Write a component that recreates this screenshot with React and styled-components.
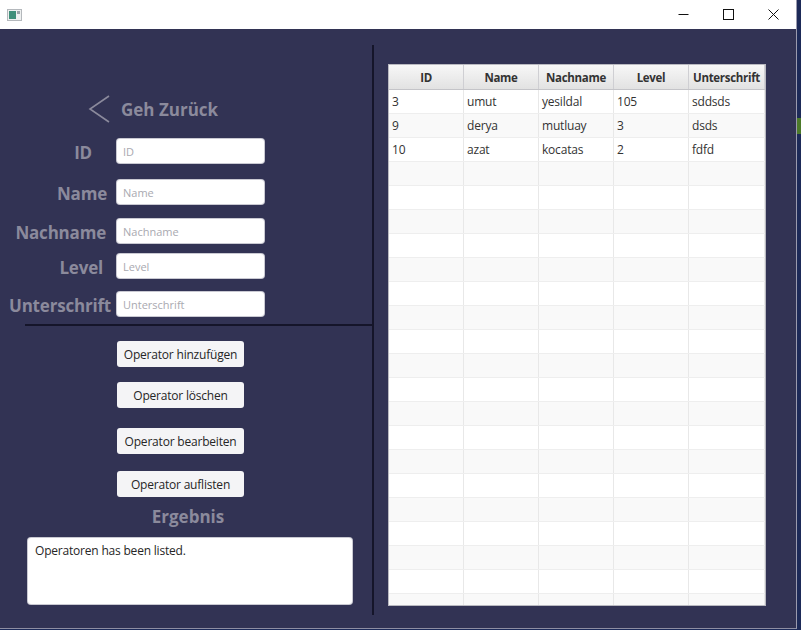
import styled, { createGlobalStyle } from 'styled-components';

// - - - GLOBAL - - - //
const Global = createGlobalStyle`
  html, body {
    margin: 0;
    padding: 0;
    width: 801px;
    height: 630px;
    overflow: hidden;
    background: #1d2a58;
  }
  * { box-sizing: border-box; }
`;

const Screen = styled.div`
  display: flex;
  flex-direction: row;
  width: 801px;
  height: 630px;
`;

const Window = styled.div`
  display: flex;
  flex-direction: column;
  width: 797px;
  height: 629px;
  border-right: 1px solid #9a9aae;
  border-bottom: 1px solid #8e8ea2;
`;

const Desktop = styled.div`
  flex: 1;
  background: linear-gradient(#1d2a58 0, #1d2a58 118px, #4c7a2a 118px, #4c7a2a 134px, #1d2a58 134px);
`;

// - - - TITLE BAR - - - //
const TitleBar = styled.header`
  display: flex;
  align-items: center;
  justify-content: space-between;
  height: 29px;
  background: #ffffff;
  padding-left: 7px;
`;

const Controls = styled.div`
  display: flex;
  height: 100%;
`;

const Control = styled.div`
  display: flex;
  align-items: center;
  justify-content: center;
  width: 45px;
  height: 100%;
`;

// - - - BODY - - - //
const Body = styled.main`
  flex: 1;
  display: flex;
  flex-direction: row;
  background: #323354;
`;

const LeftPane = styled.section`
  display: flex;
  flex-direction: column;
  width: 374px;
  margin: 16px 0 13px 0;
  border-right: 2px solid #15152a;
`;

const BackRow = styled.div`
  display: flex;
  align-items: center;
  gap: 10px;
  height: 30px;
  margin-top: 49px;
  padding-left: 88px;
`;

const Title = styled.span`
  font-family: "Open Sans", sans-serif;
  font-weight: 700;
  font-size: 17px;
  color: #8b8a9c;
`;

const FieldRow = styled.div`
  display: grid;
  grid-template-columns: 117px 147px;
  align-items: center;
  margin-top: ${p => p.$mt}px;
`;

const Label = styled.label`
  font-family: "Open Sans", sans-serif;
  font-weight: 700;
  font-size: 17px;
  color: #8b8a9c;
  text-align: right;
  padding-right: ${p => p.$pr}px;
  white-space: nowrap;
  letter-spacing: -0.2px;
  transform: translateY(1px);
`;

const Input = styled.input`
  height: 24px;
  width: 147px;
  border: none;
  border-radius: 3px;
  background: #ffffff;
  box-shadow: 0 0 0 1px #c9c9d2;
  padding: 0 6px;
  font-family: "Open Sans", sans-serif;
  font-size: 11px;
  outline: none;
  &::placeholder { color: #a9a9b0; }
`;

const HDivider = styled.hr`
  border: none;
  height: 2px;
  background: #15152a;
  margin: 8px 0 0 25px;
`;

const ButtonStack = styled.div`
  display: flex;
  flex-direction: column;
  align-items: flex-start;
  padding-left: 117px;
`;

const Button = styled.button`
  width: 127px;
  height: 26px;
  margin-top: ${p => p.$mt}px;
  border: none;
  border-radius: 3px;
  background: #f4f4f6;
  color: #262626;
  font-family: "Open Sans", sans-serif;
  font-size: 12px;
  letter-spacing: -0.2px;
  padding: 0;
`;

const Subtitle = styled.div`
  margin-top: 8px;
  text-align: center;
  width: 376px;
  font-family: "Open Sans", sans-serif;
  font-weight: 700;
  font-size: 17px;
  color: #8b8a9c;
`;

const ResultBox = styled.div`
  margin: 10px 0 0 28px;
  width: 324px;
  height: 66px;
  background: #ffffff;
  border-radius: 3px;
  box-shadow: 0 0 0 1px #c9c9d2;
  padding: 4px 7px;
  font-family: "Open Sans", sans-serif;
  font-size: 12px;
  color: #262626;
  letter-spacing: -0.2px;
`;

// - - - TABLE - - - //
const RightPane = styled.section`
  padding: 35px 0 0 14px;
`;

const Table = styled.div`
  width: 378px;
  height: 542px;
  border: 1px solid #b9b9c0;
  background: #ffffff;
  overflow: hidden;
`;

const HeadRow = styled.div`
  display: grid;
  grid-template-columns: 75px 75px 75px 75px 76px;
  height: 25px;
  background: linear-gradient(#f7f7f7, #e2e2e2);
  border-bottom: 1px solid #c4c4c8;
`;

const HeadCell = styled.div`
  display: flex;
  align-items: center;
  justify-content: center;
  border-right: 1px solid #cfcfd3;
  font-family: "Open Sans", sans-serif;
  font-weight: 700;
  font-size: 11.5px;
  color: #333333;
  letter-spacing: -0.3px;
  white-space: nowrap;
`;

const Row = styled.div`
  display: grid;
  grid-template-columns: 75px 75px 75px 75px 76px;
  height: 24px;
  background: ${p => (p.$odd ? '#f9f9f9' : '#ffffff')};
  border-bottom: 1px solid #eeeeee;
`;

const Cell = styled.div`
  display: flex;
  align-items: center;
  padding-left: 3px;
  border-right: 1px solid #e8e8e8;
  font-family: "Open Sans", sans-serif;
  font-size: 12px;
  color: #333333;
  letter-spacing: -0.2px;
`;

const fields = [
  { label: 'ID', pr: 25, mt: 15 },
  { label: 'Name', pr: 10, mt: 17 },
  { label: 'Nachname', pr: 11, mt: 15 },
  { label: 'Level', pr: 14, mt: 11 },
  { label: 'Unterschrift', pr: 6, mt: 14 },
];

const buttons = [
  { text: 'Operator hinzufügen', mt: 15 },
  { text: 'Operator löschen', mt: 15 },
  { text: 'Operator bearbeiten', mt: 20 },
  { text: 'Operator auflisten', mt: 17 },
];

const columns = ['ID', 'Name', 'Nachname', 'Level', 'Unterschrift'];

const data = [
  ['3', 'umut', 'yesildal', '105', 'sddsds'],
  ['9', 'derya', 'mutluay', '3', 'dsds'],
  ['10', 'azat', 'kocatas', '2', 'fdfd'],
];

const rows = Array.from({ length: 23 }, (_, i) => data[i] || ['', '', '', '', '']);

const App = () => {
  return (
    <>
      <Global />
      <Screen>
        <Window>
          {/* Title bar */}
          <TitleBar>
            <svg width="15" height="12" viewBox="0 0 15 12">
              <rect x="0.5" y="0.5" width="14" height="11" fill="#eef0f0" stroke="#b4b8bc" />
              <rect x="2" y="2" width="7" height="8" fill="#3f8f7a" />
              <rect x="10" y="2" width="3" height="3" fill="#9aa3a8" />
            </svg>
            <Controls>
              <Control>
                <svg width="11" height="11" viewBox="0 0 11 11">
                  <line x1="0.5" y1="5.5" x2="10.5" y2="5.5" stroke="#111" />
                </svg>
              </Control>
              <Control>
                <svg width="11" height="11" viewBox="0 0 11 11">
                  <rect x="0.5" y="0.5" width="10" height="10" fill="none" stroke="#111" />
                </svg>
              </Control>
              <Control>
                <svg width="11" height="11" viewBox="0 0 11 11">
                  <path d="M0.5 0.5 L10.5 10.5 M10.5 0.5 L0.5 10.5" stroke="#111" />
                </svg>
              </Control>
            </Controls>
          </TitleBar>

          <Body>
            <LeftPane>
              <BackRow>
                <svg width="23" height="28" viewBox="0 0 23 28">
                  <path d="M21 1 L2 14 L21 27" fill="none" stroke="#8b8a9c" strokeWidth="1.6" />
                </svg>
                <Title>Geh Zurück</Title>
              </BackRow>

              {fields.map(f => (
                <FieldRow key={f.label} $mt={f.mt}>
                  <Label $pr={f.pr}>{f.label}</Label>
                  <Input placeholder={f.label} />
                </FieldRow>
              ))}

              <HDivider />

              <ButtonStack>
                {buttons.map(b => (
                  <Button key={b.text} $mt={b.mt}>{b.text}</Button>
                ))}
              </ButtonStack>

              <Subtitle>Ergebnis</Subtitle>
              <ResultBox>Operatoren has been listed.</ResultBox>
            </LeftPane>

            <RightPane>
              <Table>
                <HeadRow>
                  {columns.map(c => <HeadCell key={c}>{c}</HeadCell>)}
                </HeadRow>
                {rows.map((r, i) => (
                  <Row key={i} $odd={i % 2 === 1}>
                    {r.map((v, j) => <Cell key={j}>{v}</Cell>)}
                  </Row>
                ))}
              </Table>
            </RightPane>
          </Body>
        </Window>
        <Desktop />
      </Screen>
    </>
  );
};

export default App;
